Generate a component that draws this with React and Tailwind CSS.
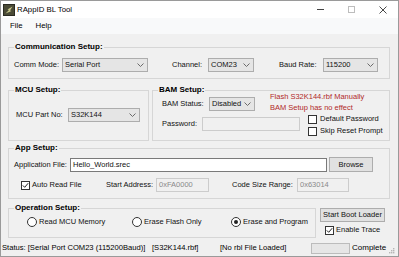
import React from "react";

function Chevron() {
  return (
    <svg width="7" height="4" viewBox="0 0 7 4" className="shrink-0">
      <polyline points="0.5,0.5 3.5,3.5 6.5,0.5" fill="none" stroke="#6b6b6b" strokeWidth="1" />
    </svg>
  );
}

function Combo({ value, className }) {
  return (
    <div className={`flex items-center justify-between h-[14px] border border-[#adadad] bg-[#e5e5e5] pl-[2px] pr-[3px] shrink-0 ${className}`}>
      <span className="leading-none whitespace-nowrap">{value}</span>
      <Chevron />
    </div>
  );
}

function Check({ checked }) {
  return (
    <span className="flex items-center justify-center w-[9px] h-[9px] border border-[#333] bg-white shrink-0">
      {checked && (
        <svg width="7" height="7" viewBox="0 0 7 7">
          <polyline points="0.8,3.4 2.7,5.3 6.2,1.2" fill="none" stroke="#222" strokeWidth="1" />
        </svg>
      )}
    </span>
  );
}

function Radio({ checked }) {
  return (
    <span className="flex items-center justify-center w-[10px] h-[10px] rounded-full border border-[#333] bg-white shrink-0">
      {checked && <span className="w-[4px] h-[4px] rounded-full bg-[#222]" />}
    </span>
  );
}

function Group({ title, className, children }) {
  return (
    <div className={`relative border border-[#d6d6d6] shrink-0 ${className}`}>
      <span className="absolute -top-[7px] left-[5px] px-[1px] bg-[#f0f0f0] text-[8px] font-bold leading-[12px] text-black whitespace-nowrap">
        {title}
      </span>
      {children}
    </div>
  );
}

function AppIcon() {
  return (
    <svg width="12" height="12" viewBox="0 0 12 12" className="shrink-0">
      <rect x="0" y="0" width="12" height="12" fill="#2b2b22" />
      <rect x="1" y="1" width="10" height="10" fill="#4a4a36" />
      <path d="M2.5 9.5 L6 6 L4.5 5.5 L9.5 2.5 L7 6.5 L8.5 7 Z" fill="#c9c98a" />
    </svg>
  );
}

export default function App() {
  return (
    <div className="w-[399px] h-[257px] border border-[#9a9a9a] flex flex-col bg-[#f0f0f0] text-[7.5px] text-[#111] font-['Liberation_Sans',Arial,sans-serif] overflow-hidden">
      {/* title bar */}
      <div className="h-[17px] bg-white flex items-center shrink-0">
        <div className="ml-[2px] mt-[1px]">
          <AppIcon />
        </div>
        <span className="ml-[2px] text-[7.8px] text-black">RAppID BL Tool</span>
        <div className="ml-auto flex h-full">
          <div className="w-[31px] flex items-center justify-center">
            <span className="w-[7px] h-[1px] bg-[#444]" />
          </div>
          <div className="w-[31px] flex items-center justify-center">
            <span className="w-[7px] h-[7px] border border-[#bdbdbd]" />
          </div>
          <div className="w-[31px] flex items-center justify-center">
            <svg width="8" height="8" viewBox="0 0 8 8">
              <path d="M0.5 0.5 L7.5 7.5 M7.5 0.5 L0.5 7.5" stroke="#333" strokeWidth="0.9" fill="none" />
            </svg>
          </div>
        </div>
      </div>

      {/* menu bar */}
      <div className="h-[16px] bg-[#f8f9fa] flex items-center pl-[9px] text-[7.8px] text-black shrink-0">
        <span>File</span>
        <span className="ml-[13px]">Help</span>
      </div>

      {/* body */}
      <div className="h-[206px] pl-[7px] flex flex-col shrink-0">
        <Group title="Communication Setup:" className="mt-[13px] w-[382px] h-[32px]">
          <div className="flex items-center h-[14px] mt-[10px] pl-[5px]">
            <span className="w-[48px]">Comm Mode:</span>
            <Combo value="Serial Port" className="w-[86px]" />
            <span className="ml-[24px] w-[36px]">Channel:</span>
            <Combo value="COM23" className="w-[46px]" />
            <span className="ml-[25px] w-[44px]">Baud Rate:</span>
            <Combo value="115200" className="w-[55px]" />
          </div>
        </Group>

        <div className="flex mt-[11px] h-[51px] shrink-0">
          <Group title="MCU Setup:" className="w-[141px] h-[51px]">
            <div className="flex items-center h-[14px] mt-[17px] pl-[7px]">
              <span className="w-[52px]">MCU Part No:</span>
              <Combo value="S32K144" className="w-[72px]" />
            </div>
          </Group>
          <Group title="BAM Setup:" className="ml-[3px] w-[238px] h-[51px]">
            <div className="flex items-start pl-[9px] h-[22px]">
              <span className="w-[47px] h-[14px] mt-[6px] flex items-center">BAM Status:</span>
              <Combo value="Disabled" className="w-[46px] mt-[6px]" />
              <div className="ml-[15px] leading-[11px] text-[#b02a2a] whitespace-nowrap">
                <div>Flash S32K144.rbf Manually</div>
                <div>BAM Setup has no effect</div>
              </div>
            </div>
            <div className="flex items-start pl-[9px]">
              <span className="w-[40px] h-[14px] mt-[4px] flex items-center">Password:</span>
              <div className="w-[98px] h-[14px] mt-[4px] border border-[#cccccc] bg-[#f0f0f0] shrink-0" />
              <div className="ml-[8px] flex flex-col">
                <div className="h-[12px] flex items-center">
                  <Check />
                  <span className="ml-[3px] whitespace-nowrap">Default Password</span>
                </div>
                <div className="h-[12px] flex items-center">
                  <Check />
                  <span className="ml-[3px] whitespace-nowrap">Skip Reset Prompt</span>
                </div>
              </div>
            </div>
          </Group>
        </div>

        <Group title="App Setup:" className="mt-[7px] w-[382px] h-[51px]">
          <div className="flex items-center h-[15px] mt-[8px] pl-[5px]">
            <span className="w-[56px]">Application File:</span>
            <div className="w-[257px] h-[14px] border border-[#7a7a7a] bg-white flex items-center pl-[2px] shrink-0">
              Hello_World.srec
            </div>
            <div className="ml-[2px] w-[44px] h-[15px] border border-[#adadad] bg-[#e1e1e1] flex items-center justify-center shrink-0">
              Browse
            </div>
          </div>
          <div className="flex items-center h-[14px] mt-[6px] pl-[12px]">
            <div className="w-[85px] flex items-center">
              <Check checked />
              <span className="ml-[2px]">Auto Read File</span>
            </div>
            <span className="w-[50px]">Start Address:</span>
            <div className="w-[53px] h-[14px] border border-[#cccccc] bg-[#f0f0f0] text-[#8a8a8a] flex items-center pl-[2px] shrink-0">
              0xFA0000
            </div>
            <span className="ml-[23px] w-[65px]">Code Size Range:</span>
            <div className="w-[52px] h-[14px] border border-[#cccccc] bg-[#f0f0f0] text-[#8a8a8a] flex items-center pl-[2px] shrink-0">
              0x63014
            </div>
          </div>
        </Group>

        <div className="flex mt-[9px] shrink-0">
          <Group title="Operation Setup:" className="w-[308px] h-[30px]">
            <div className="flex items-center h-[12px] mt-[7px] pl-[18px]">
              <div className="w-[105px] flex items-center">
                <Radio />
                <span className="ml-[2px]">Read MCU Memory</span>
              </div>
              <div className="w-[99px] flex items-center">
                <Radio />
                <span className="ml-[2px]">Erase Flash Only</span>
              </div>
              <div className="flex items-center">
                <Radio checked />
                <span className="ml-[2px]">Erase and Program</span>
              </div>
            </div>
          </Group>
          <div className="ml-[4px] flex flex-col">
            <div className="w-[65px] h-[14px] border border-[#adadad] bg-[#e1e1e1] flex items-center justify-center whitespace-nowrap">
              Start Boot Loader
            </div>
            <div className="mt-[3px] h-[10px] pl-[5px] flex items-center">
              <Check checked />
              <span className="ml-[2px]">Enable Trace</span>
            </div>
          </div>
        </div>
      </div>

      {/* status bar */}
      <div className="h-[16px] flex items-center pl-[1px] text-[7.6px] text-black whitespace-nowrap shrink-0">
        <span className="w-[150px]">Status: [Serial Port COM23 (115200Baud)]</span>
        <span className="w-[68px]">[S32K144.rbf]</span>
        <span className="w-[91px]">[No rbl File Loaded]</span>
        <div className="w-[39px] h-[11px] border border-[#bcbcbc] bg-[#e6e6e6] shrink-0" />
        <span className="ml-[2px] text-[8px]">Complete</span>
        <svg width="7" height="7" viewBox="0 0 7 7" className="ml-auto mr-[3px] mt-[5px]">
          <rect x="5" y="1" width="1.4" height="1.4" fill="#b5b5b5" />
          <rect x="3" y="3" width="1.4" height="1.4" fill="#b5b5b5" />
          <rect x="5" y="3" width="1.4" height="1.4" fill="#b5b5b5" />
          <rect x="1" y="5" width="1.4" height="1.4" fill="#b5b5b5" />
          <rect x="3" y="5" width="1.4" height="1.4" fill="#b5b5b5" />
          <rect x="5" y="5" width="1.4" height="1.4" fill="#b5b5b5" />
        </svg>
      </div>
    </div>
  );
}
